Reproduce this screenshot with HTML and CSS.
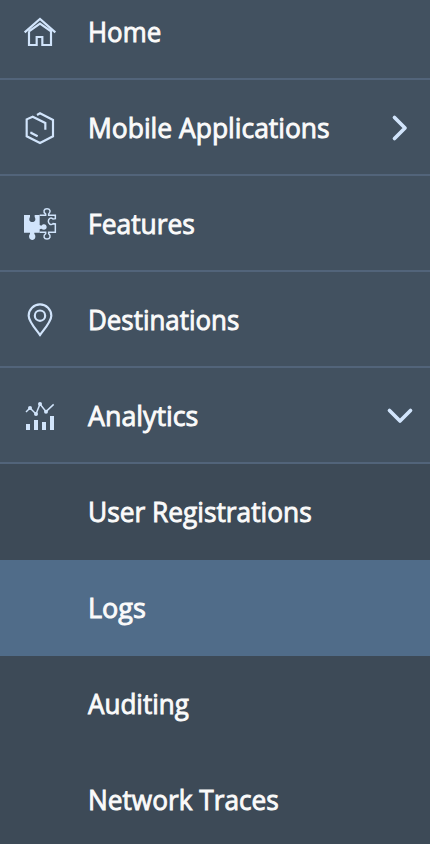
FILE: index.html
```
<!DOCTYPE html>
<html lang="en">
<head>
<meta charset="utf-8">
<title>Navigation</title>
<link rel="stylesheet" href="styles.css">
</head>
<body>
<nav class="nav">
  <ul class="list">
    <li class="item">
      <svg class="icon" viewBox="0 -3 150 150"><path d="M26 73 72 33 118 73M39 70V111H62V87H79V111H105V70L72 47 39 70"/></svg>
      <span class="label home">Home</span>
    </li>
    <li class="item">
      <svg class="icon" viewBox="0 -3 150 150"><path d="M63 33 72 28 111 48V97L72 117 32 97V46L50 38 88 57V77M46 83V87L65 97"/></svg>
      <span class="label mobile">Mobile Applications</span>
      <svg class="arrow arrow-right" viewBox="0 0 40 40"><path d="M18.500 9.500 29 20 18.500 30.500"/></svg>
    </li>
    <li class="item">
      <svg class="icon" viewBox="0 -3 150 150"><path class="solid" d="M24 45H42V51C37 60 42 66 49 66S61 60 56 51V45H71V75L76 77C83 69 92 73 92 81S83 92 76 86L71 88V98H55V102C61 108 58 120 49 120S36 108 42 102V98H24Z"/><path class="thin" d="M71 46H89V42C80 35 84 26 93 26S106 35 98 42V46H118V56L111 57C104 51 97 56 97 64S105 77 111 71L118 72V97H98V101C106 108 102 117 93 117S80 108 89 101V97H71"/></svg>
      <span class="label features">Features</span>
    </li>
    <li class="item">
      <svg class="icon" viewBox="0 -3 150 150"><path d="M72 117C59 99 38 76 38 59A34 34 0 0 1 106 59C106 76 85 99 72 117Z"/><circle cx="72" cy="59" r="15.500"/></svg>
      <span class="label destinations">Destinations</span>
    </li>
    <li class="item">
      <svg class="icon" viewBox="0 -3 150 150"><path class="thin" d="M30 60 42 48 60 66 72 36 90 59 113 37"/><path class="solid" d="M30 96H42V114H30ZM54 84H66V114H54ZM78 90H90V114H78ZM102 72H114V114H102Z"/><g class="solid"><circle cx="42" cy="48" r="6"/><circle cx="60" cy="66" r="6"/><circle cx="72" cy="36" r="6"/><circle cx="90" cy="59" r="6"/></g></svg>
      <span class="label analytics">Analytics</span>
      <svg class="arrow" viewBox="0 0 40 40"><path d="M9.500 14.500 20 25 30.500 14.500"/></svg>
    </li>
  </ul>
  <ul class="list sub">
    <li class="item"><span class="label user">User Registrations</span></li>
    <li class="item selected"><span class="label logs">Logs</span></li>
    <li class="item"><span class="label auditing">Auditing</span></li>
    <li class="item"><span class="label network">Network Traces</span></li>
  </ul>
</nav>
</body>
</html>
```
FILE: styles.css
```
body { margin: 0; }
.nav {
  height: 844px;
  overflow: hidden;
  background: #3d4a57;
  color: #fafafa;
  font: 400 28px/40px "Open Sans", sans-serif;
}
.list { margin: 0; padding: 0; list-style: none; background: #425160; }
.list:first-child { margin-top: -16px; }
.sub { background: #3d4a57; }
.item {
  display: flex;
  align-items: center;
  box-sizing: border-box;
  height: 96px;
  padding: 0 10px 0 16px;
  box-shadow: inset 0 -2px #52647a;
}
.sub .item { padding-left: 88px; box-shadow: none; }
.sub .selected { background: #506c89; }
.icon { width: 50px; height: 50px; margin-right: 22px; }
.arrow { width: 40px; height: 40px; margin-left: auto; }
.arrow-right { margin-right: 4px; }
svg { flex: none; fill: none; stroke: #d1e4fb; stroke-width: 6.500; }
.thin { stroke-width: 4.500; }
.solid { fill: #d1e4fb; stroke: none; }
.arrow path { stroke-width: 3.700; stroke-linecap: round; stroke-linejoin: round; }
.label {
  white-space: nowrap;
  padding-bottom: 3px;
  transform-origin: left center;
  -webkit-text-stroke: 0.9px #fafafa;
}
.home { transform: scaleX(0.925); }
.mobile { transform: scaleX(0.945); }
.features { transform: scaleX(0.943); }
.destinations { transform: scaleX(0.925); }
.analytics { transform: scaleX(0.957); }
.user { transform: scaleX(0.939); }
.logs { transform: scaleX(0.965); }
.auditing { transform: scaleX(0.93); }
.network { transform: scaleX(0.937); }
```
